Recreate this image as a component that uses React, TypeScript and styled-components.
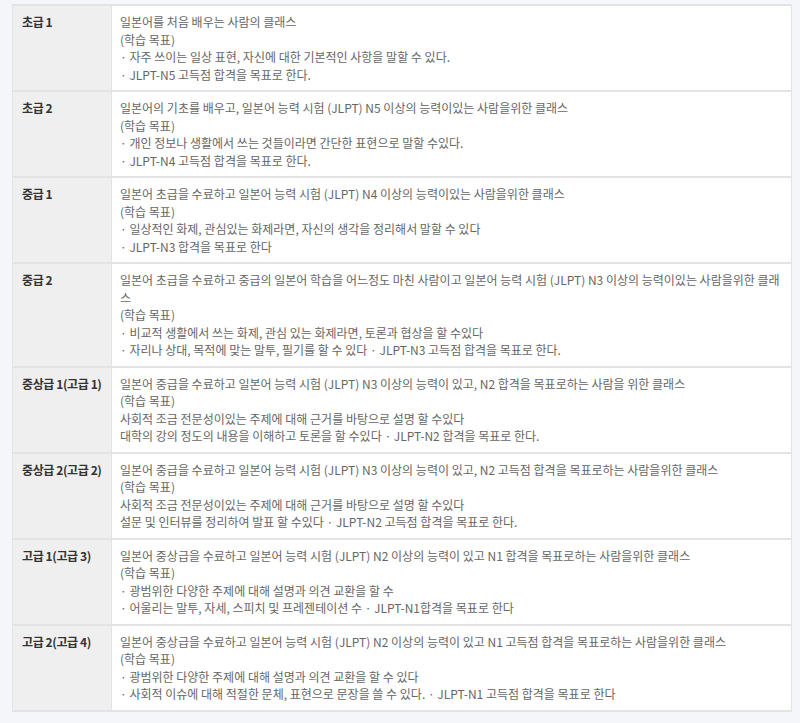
import React from "react";
import styled, { createGlobalStyle } from "styled-components";

const GlobalStyle = createGlobalStyle`
  html, body {
    margin: 0;
    padding: 0;
    background: #f5f6fa;
  }
  body {
    font-family: "Noto Sans CJK KR", "Noto Sans", sans-serif;
  }
`;

const Page = styled.div`
  padding: 4px 8px 7px 12px;
`;

const Table = styled.table`
  width: 780px;
  border-collapse: collapse;
  background: #fff;
  border: 1px solid #e3e3e3;
`;

const Head = styled.th`
  width: 80px;
  background: #efefef;
  border: 1px solid #e3e3e3;
  border-width: 2px 1px;
  padding: 7px 9px;
  vertical-align: top;
  text-align: left;
  font-size: 12px;
  font-weight: 700;
  line-height: 17.5px;
  letter-spacing: -0.4px;
  color: #333;
  white-space: nowrap;
`;

const Cell = styled.td`
  border: 1px solid #e3e3e3;
  border-width: 2px 1px;
  padding: 7px 8px;
  vertical-align: top;
  font-size: 12px;
  line-height: 17.5px;
  color: #666;
`;

const Line = styled.div``;

type Course = { level: string; lines: string[] };

const courses: Course[] = [
  {
    level: "초급 1",
    lines: [
      "일본어를 처음 배우는 사람의 클래스",
      "(학습 목표)",
      "· 자주 쓰이는 일상 표현, 자신에 대한 기본적인 사항을 말할 수 있다.",
      "· JLPT-N5 고득점 합격을 목표로 한다.",
    ],
  },
  {
    level: "초급 2",
    lines: [
      "일본어의 기초를 배우고, 일본어 능력 시험 (JLPT) N5 이상의 능력이있는 사람을위한 클래스",
      "(학습 목표)",
      "· 개인 정보나 생활에서 쓰는 것들이라면 간단한 표현으로 말할 수있다.",
      "· JLPT-N4 고득점 합격을 목표로 한다.",
    ],
  },
  {
    level: "중급 1",
    lines: [
      "일본어 초급을 수료하고 일본어 능력 시험 (JLPT) N4 이상의 능력이있는 사람을위한 클래스",
      "(학습 목표)",
      "· 일상적인 화제, 관심있는 화제라면, 자신의 생각을 정리해서 말할 수    있다",
      "· JLPT-N3 합격을 목표로 한다",
    ],
  },
  {
    level: "중급 2",
    lines: [
      "일본어 초급을 수료하고 중급의 일본어 학습을 어느정도 마친 사람이고 일본어 능력 시험 (JLPT) N3 이상의 능력이있는 사람을위한 클래스",
      "(학습 목표)",
      "· 비교적 생활에서 쓰는 화제, 관심 있는 화제라면, 토론과 협상을 할 수있다",
      "· 자리나 상대, 목적에 맞는 말투, 필기를 할 수 있다 · JLPT-N3 고득점 합격을 목표로 한다.",
    ],
  },
  {
    level: "중상급 1(고급 1)",
    lines: [
      "일본어 중급을 수료하고 일본어 능력 시험 (JLPT) N3 이상의 능력이 있고, N2 합격을 목표로하는 사람을 위한 클래스",
      "(학습 목표)",
      "사회적 조금 전문성이있는 주제에 대해 근거를 바탕으로 설명 할 수있다",
      "대학의 강의 정도의 내용을 이해하고 토론을 할 수있다 · JLPT-N2 합격을 목표로 한다.",
    ],
  },
  {
    level: "중상급 2(고급 2)",
    lines: [
      "일본어 중급을 수료하고 일본어 능력 시험 (JLPT) N3 이상의 능력이 있고, N2 고득점 합격을 목표로하는 사람을위한 클래스",
      "(학습 목표)",
      "사회적 조금 전문성이있는 주제에 대해 근거를 바탕으로 설명 할 수있다",
      "설문 및 인터뷰를 정리하여 발표 할 수있다 · JLPT-N2 고득점 합격을 목표로 한다.",
    ],
  },
  {
    level: "고급 1(고급 3)",
    lines: [
      "일본어 중상급을 수료하고 일본어 능력 시험 (JLPT) N2 이상의 능력이 있고 N1 합격을 목표로하는 사람을위한 클래스",
      "(학습 목표)",
      "· 광범위한 다양한 주제에 대해 설명과 의견 교환을 할 수",
      "· 어울리는 말투, 자세, 스피치 및 프레젠테이션 수 · JLPT-N1합격을 목표로 한다",
    ],
  },
  {
    level: "고급 2(고급 4)",
    lines: [
      "일본어 중상급을 수료하고 일본어 능력 시험 (JLPT) N2 이상의 능력이 있고 N1 고득점 합격을 목표로하는 사람을위한 클래스",
      "(학습 목표)",
      "· 광범위한 다양한 주제에 대해 설명과 의견 교환을 할 수 있다",
      "· 사회적 이슈에 대해 적절한 문체, 표현으로 문장을 쓸 수 있다. · JLPT-N1 고득점 합격을 목표로 한다",
    ],
  },
];

export default function App() {
  return (
    <>
      <GlobalStyle />
      <Page>
        <Table>
          <tbody>
            {courses.map((c) => (
              <tr key={c.level}>
                <Head>{c.level}</Head>
                <Cell>
                  {c.lines.map((l, i) => (
                    <Line key={i}>{l}</Line>
                  ))}
                </Cell>
              </tr>
            ))}
          </tbody>
        </Table>
      </Page>
    </>
  );
}
